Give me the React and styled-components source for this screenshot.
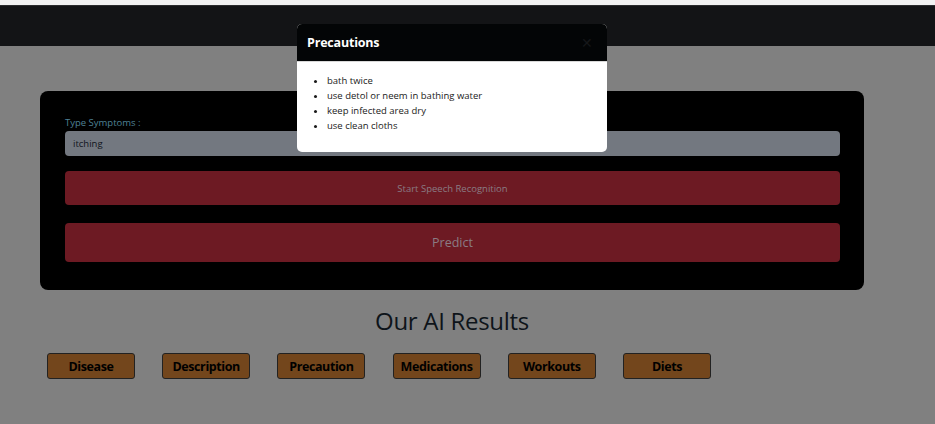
import React from 'react'
import styled, { createGlobalStyle } from 'styled-components'

const GlobalStyle = createGlobalStyle`
    * { box-sizing: border-box; }
    body {
        margin: 0;
        background: #808080;
        font-family: "Open Sans", "Noto Sans", sans-serif;
    }
`

const TopStrip = styled.div`
    height: 6px;
    background: #f2f2f2;
    border-bottom: 1px solid #2b2c2e;
`
const Navbar = styled.nav`
    height: 40px;
    background: #131416;
`
const Main = styled.main`
    padding: 45px 71px 40px 40px;
`
const FormCard = styled.div`
    background: #000;
    border-radius: 8px;
    padding: 26px 24px 28px 25px;
    display: flex;
    flex-direction: column;
`
const Label = styled.label`
    font-size: 9.5px;
    line-height: 12px;
    color: #4f8296;
    margin-bottom: 2px;
`
const Input = styled.input`
    height: 25px;
    border: none;
    border-radius: 4px;
    background: #737880;
    color: #10141c;
    font-family: inherit;
    font-size: 9.5px;
    padding: 0 8px;
    outline: none;
`
const RedButton = styled.button`
    height: ${p => p.$h}px;
    margin-top: ${p => p.$mt}px;
    border: none;
    border-radius: 4px;
    background: #6d1a23;
    color: #8a7c83;
    font-family: inherit;
    font-size: ${p => p.$fs}px;
`
const Heading = styled.h2`
    margin: 16px 0 17px;
    text-align: center;
    font-weight: 500;
    font-size: 24px;
    line-height: 30px;
    letter-spacing: -0.3px;
    color: #0e141a;
`
const ResultRow = styled.div`
    display: flex;
    gap: 27.2px;
    padding-left: 7px;
`
const ResultButton = styled.button`
    width: 88px;
    height: 26px;
    border: 1px solid #222;
    border-radius: 3px;
    background: #73461c;
    color: #000;
    font-family: inherit;
    font-weight: 700;
    font-size: 12.5px;
    letter-spacing: -0.4px;
    padding: 0;
`
const Modal = styled.div`
    position: absolute;
    left: 297px;
    top: 24px;
    width: 310px;
    background: #fff;
    border-radius: 5px;
    overflow: hidden;
`
const ModalHeader = styled.div`
    height: 38px;
    background: #030506;
    display: flex;
    align-items: center;
    justify-content: space-between;
    padding: 0 10px;
    border-bottom: 1px solid #d8d8d8;
`
const ModalTitle = styled.h5`
    margin: 0;
    color: #fff;
    font-size: 12.5px;
    font-weight: 700;
    letter-spacing: -0.2px;
`
const CloseX = styled.span`
    color: #151719;
    font-size: 14px;
    margin-right: 4px;
`
const ModalBody = styled.ul`
    margin: 0;
    padding: 11px 10px 19px 30px;
    font-size: 9.5px;
    line-height: 15px;
    color: #1a1a1a;
`

const results = ['Disease', 'Description', 'Precaution', 'Medications', 'Workouts', 'Diets']
const precautions = ['bath twice', 'use detol or neem in bathing water', 'keep infected area dry', 'use clean cloths']

const App = () => {
    return (
        <>
            <GlobalStyle />
            <TopStrip />
            <Navbar />
            <Main>
                <FormCard>
                    <Label>Type Symptoms :</Label>
                    <Input defaultValue="itching" />
                    <RedButton $h={34} $mt={15} $fs={9.5}>Start Speech Recognition</RedButton>
                    <RedButton $h={39} $mt={18} $fs={12.5}>Predict</RedButton>
                </FormCard>
                <Heading>Our AI Results</Heading>
                <ResultRow>
                    {results.map(r => <ResultButton key={r}>{r}</ResultButton>)}
                </ResultRow>
            </Main>
            <Modal>
                <ModalHeader>
                    <ModalTitle>Precautions</ModalTitle>
                    <CloseX>✕</CloseX>
                </ModalHeader>
                <ModalBody>
                    {precautions.map(p => <li key={p}>{p}</li>)}
                </ModalBody>
            </Modal>
        </>
    )
}

export default App
